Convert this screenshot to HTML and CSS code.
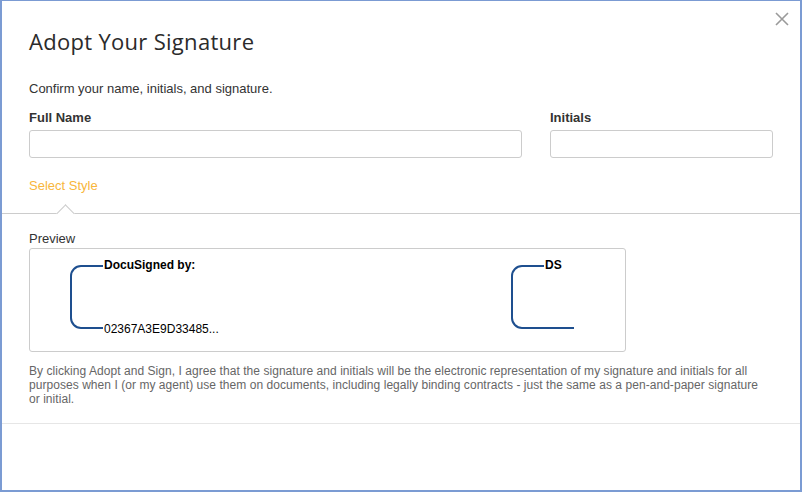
FILE: index.html
```html
<!DOCTYPE html>
<html lang="en">
<head>
<meta charset="utf-8">
<title>Adopt Your Signature</title>
<link rel="stylesheet" href="styles.css">
</head>
<body>
<div class="dialog">
  <button class="close" aria-label="Close">
    <svg width="14" height="14" viewBox="0 0 14 14"><path d="M1 1 L13 13 M13 1 L1 13" stroke="#9a9a9a" stroke-width="1.6" fill="none"/></svg>
  </button>
  <div class="top">
    <h1 class="title">Adopt Your Signature</h1>
    <p class="intro">Confirm your name, initials, and signature.</p>
    <div class="fields">
      <label class="field">
        <span class="label">Full Name</span>
        <input class="input" type="text">
      </label>
      <label class="field">
        <span class="label">Initials</span>
        <input class="input" type="text">
      </label>
    </div>
    <div class="tab">Select Style</div>
  </div>
  <div class="divider"></div>
  <div class="preview-section">
    <div class="preview-label">Preview</div>
    <div class="preview-box">
      <div class="sig sig-main">
        <svg class="bracket" width="33" height="64" viewBox="0 0 33 64"><path d="M33 1 H11 A10 10 0 0 0 1 11 V53 A10 10 0 0 0 11 63 H33" fill="none" stroke="#1e4f8f" stroke-width="2"/></svg>
        <div class="sig-text">
          <span class="sig-head">DocuSigned by:</span>
          <span class="sig-id">02367A3E9D33485...</span>
        </div>
      </div>
      <div class="sig sig-init">
        <svg class="bracket" width="33" height="64" viewBox="0 0 33 64"><path d="M33 1 H11 A10 10 0 0 0 1 11 V53 A10 10 0 0 0 11 63 H63" fill="none" stroke="#1e4f8f" stroke-width="2"/></svg>
        <div class="sig-text">
          <span class="sig-head">DS</span>
        </div>
      </div>
    </div>
    <p class="legal">By clicking Adopt and Sign, I agree that the signature and initials will be the electronic representation of my signature and initials for all purposes when I (or my agent) use them on documents, including legally binding contracts - just the same as a pen-and-paper signature or initial.</p>
  </div>
  <div class="footer-rule"></div>
</div>
</body>
</html>
```
FILE: styles.css
```css
* { box-sizing: border-box; }
html, body { margin: 0; padding: 0; background: #fff; }
body { width: 802px; height: 492px; overflow: hidden; font-family: "Liberation Sans", Arial, sans-serif; color: #333; }

.dialog {
  position: relative;
  width: 802px;
  height: 492px;
  border-style: solid;
  border-color: #7b9bd3;
  border-width: 1px 2px 2px 2px;
  background: #fff;
}

.close {
  position: absolute;
  top: 11px;
  right: 11px;
  width: 14px;
  height: 14px;
  padding: 0;
  border: 0;
  background: none;
  display: block;
}
.close svg { display: block; }

.top { padding: 25px 27px 0 27px; }

.title {
  margin: 0;
  font-family: "Open Sans", "Noto Sans", sans-serif;
  font-weight: 500;
  font-size: 22px;
  line-height: 30px;
  letter-spacing: 0.3px;
  color: #2b2b2b;
}

.intro {
  margin: 25px 0 0 0;
  font-size: 13px;
  line-height: 16px;
  color: #333;
}

.fields {
  margin-top: 13px;
  display: grid;
  grid-template-columns: 493px 223px;
  column-gap: 28px;
}
.field { display: flex; flex-direction: column; }
.label {
  font-size: 13px;
  line-height: 16px;
  font-weight: bold;
  color: #333;
}
.input {
  margin-top: 4px;
  height: 28px;
  border: 1px solid #cccccc;
  border-radius: 3px;
  background: #fff;
  font: inherit;
  padding: 0 8px;
}

.tab {
  margin-top: 20px;
  font-size: 13px;
  line-height: 16px;
  color: #f8b63c;
  padding-bottom: 19px;
}

.divider {
  position: relative;
  height: 1px;
  background: #cccccc;
}
.divider::after {
  content: "";
  position: absolute;
  left: 57px;
  top: -6px;
  width: 12px;
  height: 12px;
  background: #fff;
  border-top: 1px solid #cccccc;
  border-left: 1px solid #cccccc;
  transform: rotate(45deg);
}

.preview-section { padding: 17px 27px 0 27px; }
.preview-label {
  font-size: 13px;
  line-height: 16px;
  color: #333;
}
.preview-box {
  margin-top: 1px;
  width: 597px;
  height: 104px;
  border: 1px solid #cccccc;
  border-radius: 3px;
  display: flex;
  padding: 16px 0 0 40px;
}
.sig { display: flex; align-items: stretch; height: 64px; }
.sig-main { width: 441px; }
.bracket { display: block; overflow: visible; flex: none; }
.sig-text {
  margin: -7px 0 -7px 1px;
  display: flex;
  flex-direction: column;
  justify-content: space-between;
  font-size: 12px;
  line-height: 14px;
  color: #000;
}
.sig-head { font-weight: bold; }

.legal {
  margin: 12px 0 0 0;
  max-width: 738px;
  font-size: 12px;
  line-height: 14px;
  letter-spacing: 0.05px;
  color: #666;
}

.footer-rule {
  margin-top: 17px;
  height: 1px;
  background: #e6e6e6;
}
```
